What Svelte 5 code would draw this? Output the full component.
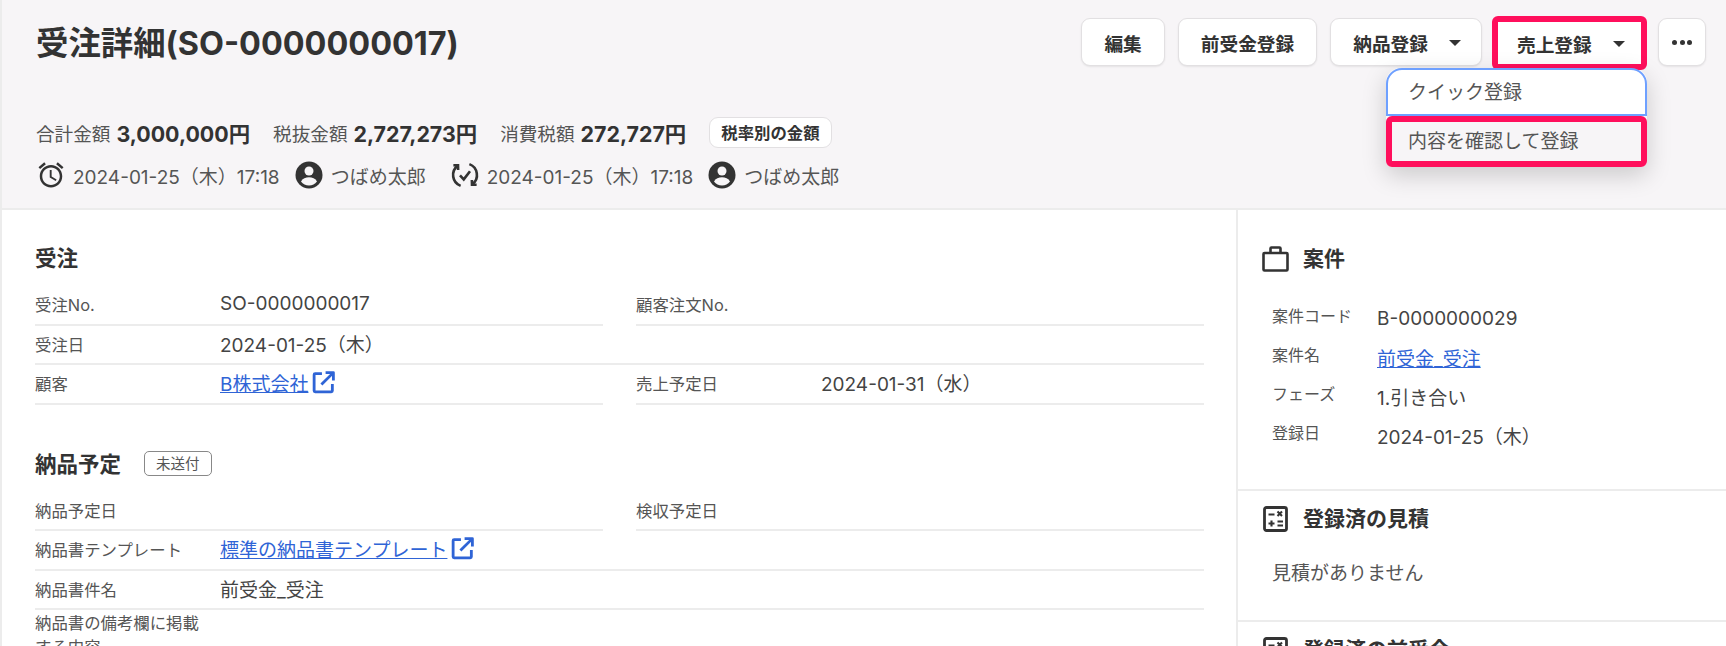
<script>
  const summary = [
    { label: '合計金額', value: '3,000,000円' },
    { label: '税抜金額', value: '2,727,273円' },
    { label: '消費税額', value: '272,727円' }
  ];
  const stamps = [
    { icon: 'alarm', date: '2024-01-25（木）17:18', name: 'つばめ太郎' },
    { icon: 'sync', date: '2024-01-25（木）17:18', name: 'つばめ太郎' }
  ];
  const project = [
    { label: '案件コード', value: 'B-0000000029' },
    { label: '案件名', value: '前受金_受注', link: true },
    { label: 'フェーズ', value: '1.引き合い' },
    { label: '登録日', value: '2024-01-25（木）' }
  ];
</script>

{#snippet external()}
  <svg class="ext" viewBox="0 0 24 24" fill="none" stroke="#2f64d6" stroke-width="2.7" stroke-linejoin="round">
    <path d="M10.500 3.500H4a1 1 0 0 0-1 1v15.500a1 1 0 0 0 1 1h15.500a1 1 0 0 0 1-1V13.500" />
    <path d="M14 2.500h7.500V10M21 3 10 14" />
  </svg>
{/snippet}

{#snippet calc()}
  <svg viewBox="0 0 27 26" fill="none" stroke="#333" stroke-width="2.8">
    <rect x="2.500" y="1.500" width="22" height="23" rx="2" />
    <path d="M6.500 8.500h6M15.500 5.500l4.500 4.500M20 5.500 15.500 10M6.500 17.500h6M9.500 14.500v6M15.500 15.500h5.500M15.500 19.500h5.500" stroke-width="2.100" />
  </svg>
{/snippet}

{#snippet row(label, value)}
  <div class="row">
    <span class="label">{label}</span>
    <span class="value">{value}</span>
  </div>
{/snippet}

{#snippet linkRow(label, value)}
  <div class="row">
    <span class="label">{label}</span>
    <span class="value"><a href="#top">{value}</a>{@render external()}</span>
  </div>
{/snippet}

<div class="page">
  <header>
    <div class="top">
      <h1>受注詳細(SO-0000000017)</h1>
      <div class="actions">
        <button>編集</button>
        <button>前受金登録</button>
        <button class="caret">納品登録<i></i></button>
        <div class="sales">
          <button class="caret marked">売上登録<i></i></button>
          <div class="menu">
            <div class="item first"><span>クイック登録</span></div>
            <div class="item second"><span>内容を確認して登録</span></div>
          </div>
        </div>
        <button class="more" aria-label="その他"><b></b><b></b><b></b></button>
      </div>
    </div>
    <div class="summary">
      {#each summary as s}
        <span class="sum"><span class="sum-label">{s.label}</span><strong>{s.value}</strong></span>
      {/each}
      <span class="pill">税率別の金額</span>
    </div>
    <div class="stamps">
      {#each stamps as s}
        <span class="stamp">
          {#if s.icon === 'alarm'}
            <svg class="stamp-icon" viewBox="0 0 24 24" fill="#333">
              <path d="M22 5.720l-4.600-3.860-1.290 1.530 4.600 3.860L22 5.720zM7.880 3.390L6.600 1.860 2 5.710l1.290 1.530 4.590-3.850zM12.500 8H11v6l4.750 2.850.75-1.230-4-2.370V8zM12 4c-4.970 0-9 4.030-9 9s4.030 9 9 9 9-4.030 9-9-4.030-9-9-9zm0 16c-3.870 0-7-3.130-7-7s3.130-7 7-7 7 3.130 7 7-3.130 7-7 7z" />
            </svg>
          {:else}
            <svg class="stamp-icon" viewBox="0 0 24 24" fill="none" stroke="#333" stroke-width="2.100">
              <path d="M8.500 20.700A9.300 9.300 0 0 1 6 4.700M15.500 3.300A9.300 9.300 0 0 1 18 19.300" />
              <path d="M2.700 4.200 6.400 4.300 6.500 8M21.300 19.800 17.600 19.700 17.500 16" />
              <path d="m8 12.300 3 3.200 5-6.500" />
            </svg>
          {/if}
          <span class="date">{s.date}</span>
          <svg class="person" viewBox="0 0 28 28">
            <circle cx="14" cy="14" r="13.500" fill="#333" />
            <circle cx="14" cy="10" r="4.500" fill="#f7f5f7" />
            <path d="M6 20.500c1.500-3 4.800-4.200 8-4.200s6.500 1.200 8 4.200A10.500 10.500 0 0 1 14 24.500a10.500 10.500 0 0 1-8-4z" fill="#f7f5f7" />
          </svg>
          <span class="name">{s.name}</span>
        </span>
      {/each}
    </div>
  </header>

  <div class="body">
    <main>
      <h2>受注</h2>
      <div class="grid">
        {@render row('受注No.', 'SO-0000000017')}
        {@render row('顧客注文No.', '')}
        <div class="wide">{@render row('受注日', '2024-01-25（木）')}</div>
        {@render linkRow('顧客', 'B株式会社')}
        {@render row('売上予定日', '2024-01-31（水）')}
      </div>

      <h2 class="second-title">納品予定<span class="badge">未送付</span></h2>
      <div class="grid">
        {@render row('納品予定日', '')}
        {@render row('検収予定日', '')}
        <div class="wide">{@render linkRow('納品書テンプレート', '標準の納品書テンプレート')}</div>
        <div class="wide">{@render row('納品書件名', '前受金_受注')}</div>
        <div class="wide">{@render row('納品書の備考欄に掲載する内容', '')}</div>
      </div>
    </main>

    <aside>
      <section class="project">
        <h3>
          <svg viewBox="0 0 27 26" fill="none" stroke="#333" stroke-width="2.600" stroke-linejoin="round">
            <rect x="1.500" y="7" width="24" height="17.500" rx="1" />
            <path d="M8.500 7V2.500a1 1 0 0 1 1-1h8a1 1 0 0 1 1 1V7" />
          </svg>
          案件
        </h3>
        <dl>
          {#each project as p}
            <div class="info">
              <dt>{p.label}</dt>
              <dd>{#if p.link}<a href="#top">{p.value}</a>{:else}{p.value}{/if}</dd>
            </div>
          {/each}
        </dl>
      </section>
      <section class="quotes">
        <h3>{@render calc()}登録済の見積</h3>
        <p>見積がありません</p>
      </section>
      <section class="advance">
        <h3>{@render calc()}登録済の前受金</h3>
      </section>
    </aside>
  </div>
</div>

<style>
  :global(body) {
    background: #fff;
    overflow: hidden;
  }

  .page {
    height: 646px;
    overflow: hidden;
    border-left: 2px solid #ececec;
    color: #333;
    font-family: Inter, "Noto Sans CJK JP", sans-serif;
  }

  header {
    height: 210px;
    box-sizing: border-box;
    padding: 18px 20px 0 34px;
    background: #f7f5f7;
    border-bottom: 2px solid #ececec;
  }

  .top {
    display: flex;
    justify-content: space-between;
    align-items: flex-start;
    height: 98px;
  }

  h1 {
    margin: 7px 0 0;
    font-size: 32.4px;
    line-height: 38px;
    font-weight: 700;
  }

  .actions {
    display: flex;
    gap: 13px;
    align-items: flex-start;
  }

  button {
    height: 48px;
    padding: 0 22px;
    box-sizing: border-box;
    border: 1px solid #e2e0e2;
    border-radius: 9px;
    background: #fff;
    color: #333;
    font: 600 18.7px Inter, "Noto Sans CJK JP", sans-serif;
    white-space: nowrap;
    box-shadow: 0 1px 2px rgba(0, 0, 0, 0.08);
  }

  .caret {
    display: flex;
    align-items: center;
    gap: 21px;
    padding-right: 20px;
  }

  .caret i {
    width: 0;
    height: 0;
    margin-top: 2px;
    border-left: 6px solid transparent;
    border-right: 6px solid transparent;
    border-top: 6px solid #333;
  }

  .sales {
    position: relative;
    margin-left: -3px;
    margin-top: -2px;
    margin-right: -2px;
  }

  .marked {
    height: 54px;
    width: 155px;
    padding: 0 16px 0 19px;
    border: 6px solid #ff0f5c;
    border-radius: 6px;
    box-shadow: none;
  }

  .menu {
    position: absolute;
    top: 52px;
    right: 0;
    width: 261px;
    font-size: 19px;
    color: #555;
    box-shadow: 0 8px 24px rgba(0, 0, 0, 0.18);
    border-radius: 14px 14px 6px 6px;
  }

  .item {
    display: flex;
    align-items: center;
    box-sizing: border-box;
    padding-left: 20px;
  }

  .item span {
    margin-top: -4px;
  }

  .first {
    height: 48px;
    background: #fff;
    border: 2px solid #6ea0ff;
    border-radius: 16px 16px 0 0;
  }

  .second {
    height: 51px;
    background: #f7f5f7;
    border: 6px solid #ff0f5c;
    border-radius: 6px;
    padding-left: 16px;
  }

  .more {
    width: 48px;
    padding: 0;
    display: flex;
    align-items: center;
    justify-content: center;
    gap: 2.5px;
  }

  .more b {
    width: 5px;
    height: 5px;
    border-radius: 50%;
    background: #333;
  }

  .summary {
    display: flex;
    align-items: center;
    height: 32px;
    font-size: 18.6px;
  }

  .sum {
    margin-right: 23px;
    display: flex;
    align-items: center;
    gap: 6px;
  }

  .sum-label {
    color: #555;
  }

  .sum strong {
    font-size: 21.4px;
    font-weight: 700;
  }

  .pill {
    height: 31px;
    box-sizing: border-box;
    padding: 0 11px;
    display: flex;
    align-items: center;
    background: #fff;
    border: 1px solid #e2e0e2;
    border-radius: 9px;
    font-size: 16.4px;
    font-weight: 600;
  }

  .stamps {
    display: flex;
    gap: 24px;
    margin-top: 12px;
    font-size: 19px;
    color: #555;
  }

  .stamp {
    display: flex;
    align-items: center;
  }

  .stamp-icon {
    width: 30px;
    height: 30px;
    margin-right: 7px;
  }

  .person {
    width: 28px;
    height: 28px;
    margin: 0 8px 0 15px;
  }

  .body {
    display: grid;
    grid-template-columns: 1236px 1fr;
  }

  main {
    box-sizing: border-box;
    padding: 34px 20px 0 33px;
    border-right: 2px solid #ececec;
    height: 436px;
  }

  h2 {
    margin: 0 0 14px;
    font-size: 21.5px;
    line-height: 28px;
    font-weight: 700;
    display: flex;
    align-items: center;
  }

  .second-title {
    margin-top: 45px;
    margin-bottom: 14px;
  }

  .badge {
    margin-left: 23px;
    padding: 0 11px;
    height: 23px;
    display: flex;
    align-items: center;
    border: 1px solid #888;
    border-radius: 5px;
    font-size: 14.5px;
    font-weight: 400;
    color: #555;
  }

  .grid {
    display: grid;
    grid-template-columns: 568px 568px;
    column-gap: 33px;
  }

  .wide {
    grid-column: 1 / 3;
  }

  .row {
    display: flex;
    align-items: center;
    min-height: 39.5px;
    box-sizing: border-box;
    border-bottom: 2px solid #ececec;
  }

  .label {
    width: 165px;
    flex: none;
    margin: 1px 20px 0 0;
    font-size: 16.4px;
    line-height: 24px;
    color: #555;
  }

  .value {
    display: flex;
    align-items: center;
    font-size: 19px;
    color: #444;
    margin-top: -2px;
  }

  a {
    color: #2f64d6;
    text-decoration: underline;
  }

  .ext {
    width: 25px;
    height: 25px;
    margin-left: 3px;
  }

  aside section {
    padding: 35px 24px 0 24px;
    box-sizing: border-box;
    border-bottom: 2px solid #ececec;
  }

  .project {
    height: 281px;
  }

  .quotes {
    height: 131px;
    padding-top: 14px;
  }

  .advance {
    padding-top: 14px;
    border-bottom: none;
  }

  h3 {
    margin: 0;
    display: flex;
    align-items: center;
    gap: 14px;
    font-size: 21px;
    line-height: 28px;
    font-weight: 700;
  }

  h3 svg {
    width: 27px;
    height: 26px;
  }

  dl {
    margin: 25px 0 0 10px;
  }

  .info {
    display: flex;
    height: 39px;
    align-items: center;
  }

  dt {
    width: 105px;
    flex: none;
    font-size: 16px;
    color: #555;
    margin-top: -5px;
  }

  dd {
    margin: 1px 0 0;
    font-size: 19px;
    color: #444;
  }

  .quotes p {
    margin: 25px 0 0 10px;
    font-size: 19px;
    color: #555;
  }
</style>
